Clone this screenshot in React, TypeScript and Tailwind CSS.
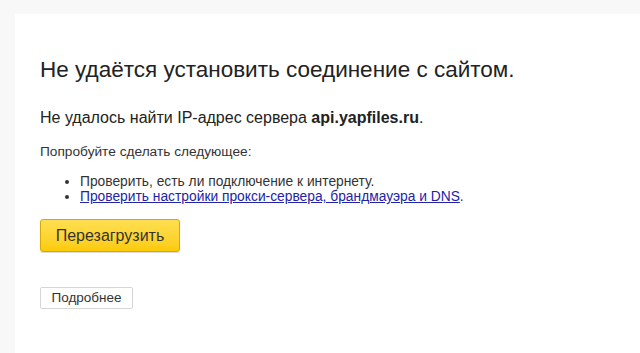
export default function App() {
  return (
    <div className="w-[640px] h-[353px] overflow-hidden bg-[#f8f8f8] pl-[15px] pt-[14px] font-['Liberation_Sans',Arial,sans-serif] text-[#222]">
      <div className="h-full bg-white pl-[25px] pt-[43px]">
        <h1 className="text-[22.5px] leading-[26px] text-[#222]">
          Не удаётся установить соединение с сайтом.
        </h1>
        <p className="mt-[25px] text-[16px] leading-[20px] text-[#222]">
          Не удалось найти IP-адрес сервера <b>api.yapfiles.ru</b>.
        </p>
        <p className="mt-[16px] text-[13.7px] leading-[16px] text-[#333]">
          Попробуйте сделать следующее:
        </p>
        <ul className="mt-[14px] list-disc pl-[40px] text-[13.8px] leading-[15px] text-[#333]">
          <li>Проверить, есть ли подключение к интернету.</li>
          <li>
            <a href="#" className="text-[#2323a8] underline">
              Проверить настройки прокси-сервера, брандмауэра и DNS
            </a>
            .
          </li>
        </ul>
        <button className="mt-[15px] block h-[33px] w-[140px] rounded-[3px] border border-[#d7a900] bg-gradient-to-b from-[#ffdf4f] to-[#fccb00] text-[16px] text-[#333] shadow-[0_1px_1px_rgba(0,0,0,0.15)]">
          Перезагрузить
        </button>
        <button className="mt-[35px] block h-[22px] w-[93px] rounded-[2px] border border-[#d6d6d6] bg-white text-[13.5px] text-[#333]">
          Подробнее
        </button>
      </div>
    </div>
  );
}
